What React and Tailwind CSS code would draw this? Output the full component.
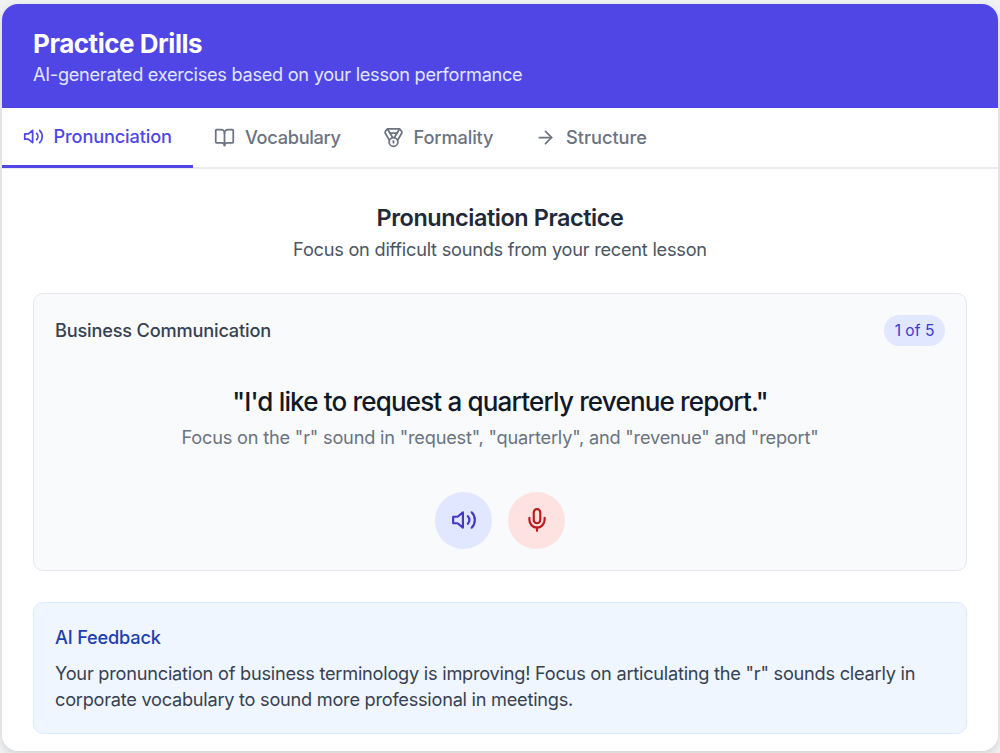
import { ArrowRight, BookOpen, Medal, Mic } from "lucide-react";

function Speaker({ size, className = "" }) {
  return (
    <svg width={size} height={size} viewBox="0 0 24 24" fill="none" stroke="currentColor" strokeWidth="2" strokeLinecap="round" strokeLinejoin="round" className={className}>
      <polygon points="11 5 6 9 2 9 2 15 6 15 11 19 11 5" />
      <path d="M15.54 8.46a5 5 0 0 1 0 7.07" />
      <path d="M19.07 4.93a10 10 0 0 1 0 14.14" />
    </svg>
  );
}

function Tab({ icon: Icon, label, className, labelClass }) {
  return (
    <button className={`flex items-center whitespace-nowrap text-[18.2px] font-medium text-[#6b7280] ${className}`}>
      <Icon size={21} className="shrink-0" />
      <span className={`ml-[10px] ${labelClass}`}>{label}</span>
    </button>
  );
}

export default function App() {
  return (
    <div className="h-[753px] w-[1000px] overflow-hidden bg-[#f0f1f3] px-[2px] pt-[4px] font-['Inter',sans-serif]">
      <main className="flex h-[747px] flex-col overflow-hidden rounded-[16px] bg-white shadow-[0_3px_8px_rgba(0,0,0,0.13)]">
        <header className="h-[104px] shrink-0 bg-[#4f46e5] px-[31px] pt-[22px]">
          <h1 className="h-[35px] whitespace-nowrap text-[26px] leading-[36px] font-bold tracking-[-0.47px] text-white">Practice Drills</h1>
          <p className="whitespace-nowrap text-[18.2px] leading-[26px] tracking-[-0.29px] text-[#e0e7ff]">AI-generated exercises based on your lesson performance</p>
        </header>
        <nav className="flex h-[61px] shrink-0 border-b-2 border-[#ebecef]">
          <Tab icon={Speaker} label="Pronunciation" className="-mb-px w-[191px] border-b-3 border-[#4f46e5] pl-[20.5px] !text-[#4f46e5]" labelClass="tracking-[-0.15px]" />
          <Tab icon={BookOpen} label="Vocabulary" className="w-[169px] pl-[21px]" labelClass="tracking-[-0.3px]" />
          <Tab icon={Medal} label="Formality" className="w-[152px] pl-[20.5px]" labelClass="tracking-[-0.12px]" />
          <Tab icon={ArrowRight} label="Structure" className="pl-[21px]" labelClass="tracking-[0px]" />
        </nav>
        <section className="flex flex-col px-[31px] pt-[31px]">
          <div className="flex flex-col items-center">
            <h2 className="whitespace-nowrap text-[23.4px] leading-[36px] font-semibold tracking-[-0.42px] text-[#1f2937]">Pronunciation Practice</h2>
            <p className="whitespace-nowrap text-[18.2px] leading-[26px] tracking-[-0.24px] text-[#4b5563]">Focus on difficult sounds from your recent lesson</p>
          </div>
          <div className="mt-[31px] h-[278px] rounded-[10px] border border-[#e5e7eb] bg-[#f9fafb] px-[21px] pt-[21px]">
            <div className="flex h-[31px] items-center justify-between">
              <h3 className="whitespace-nowrap text-[18.2px] font-medium tracking-[-0.19px] text-[#374151]">Business Communication</h3>
              <span className="flex h-[31px] w-[61px] items-center justify-center rounded-full bg-[#e0e7ff] text-[15.6px] whitespace-nowrap text-[#4338ca]">1 of 5</span>
            </div>
            <div className="mt-[38px] flex flex-col items-center">
              <p className="whitespace-nowrap text-[26px] leading-[36px] font-medium tracking-[-0.83px] text-[#111827]">"I'd like to request a quarterly revenue report."</p>
              <p className="mt-[4px] whitespace-nowrap text-[18.2px] leading-[26px] tracking-[-0.2px] text-[#6b7280]">Focus on the "r" sound in "request", "quarterly", and "revenue" and "report"</p>
            </div>
            <div className="mt-[41.5px] flex justify-center gap-[16px]">
              <button className="flex size-[57px] items-center justify-center rounded-full bg-[#e0e7ff] text-[#4338ca]"><Speaker size={26} /></button>
              <button className="flex size-[57px] items-center justify-center rounded-full bg-[#fee2e2] text-[#b91c1c]"><Mic size={26} /></button>
            </div>
          </div>
          <div className="mt-[31px] h-[132px] rounded-[10px] border border-[#dbeafe] bg-[#eff6ff] px-[21px] pt-[21px]">
            <h3 className="text-[18.2px] leading-[26px] font-medium tracking-[-0.19px] text-[#1e40af]">AI Feedback</h3>
            <p className="mt-[10px] text-[18.2px] leading-[26px] tracking-[-0.24px] whitespace-nowrap text-[#374151]">
              Your pronunciation of business terminology is improving! Focus on articulating the "r" sounds clearly in<br />
              <span className="tracking-[-0.26px]">corporate vocabulary to sound more professional in meetings.</span>
            </p>
          </div>
        </section>
      </main>
    </div>
  );
}
